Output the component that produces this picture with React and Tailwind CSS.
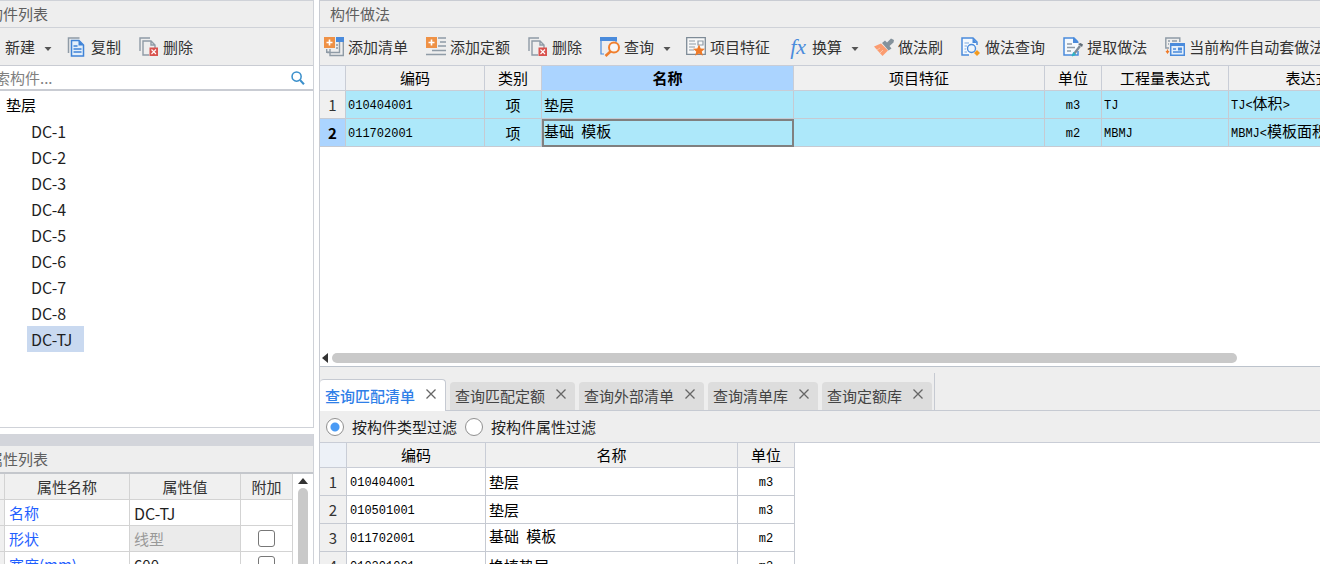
import clsx from 'clsx';

const components = ['DC-1', 'DC-2', 'DC-3', 'DC-4', 'DC-5', 'DC-6', 'DC-7', 'DC-8', 'DC-TJ'];

const methods = [
  { code: '010404001', type: '项', name: '垫层', unit: 'm3', expr: 'TJ', desc: 'TJ<体积>' },
  { code: '011702001', type: '项', name: '基础 模板', unit: 'm2', expr: 'MBMJ', desc: 'MBMJ<模板面积>' },
];

const matches = [
  { code: '010404001', name: '垫层', unit: 'm3' },
  { code: '010501001', name: '垫层', unit: 'm3' },
  { code: '011702001', name: '基础 模板', unit: 'm2' },
  { code: '010201001', name: '换填垫层', unit: 'm3' },
];

const tabs = ['查询匹配清单', '查询匹配定额', '查询外部清单', '查询清单库', '查询定额库'];

/* Icons */
function Icon({ className = 'w-5 h-5', children }) {
  return (
    <svg viewBox="0 0 20 20" fill="none" className={clsx('shrink-0', className)} aria-hidden="true">
      {children}
    </svg>
  );
}

function AddListIcon() {
  return (
    <Icon>
      <path d="M2.700 12v3.300h3" stroke="#8f9ba6" strokeWidth="1.400" />
      <path d="M6 12v6.500h13.300V4" stroke="#8f9ba6" strokeWidth="1.400" />
      <path d="M3 15.500h12.500V5" stroke="#8f9ba6" strokeWidth="1.400" />
      <path d="M12 0h8v5h-8z" fill="#4a8bdc" />
      <path d="M12 8h2M12 11h2" stroke="#8f9ba6" strokeWidth="1.300" />
      <path d="M0 0h11v11H0z" fill="#ef9145" />
      <path d="M5.500 2.500v6M2.500 5.500h6" stroke="#fff" strokeWidth="1.600" />
    </Icon>
  );
}

function AddQuotaIcon() {
  return (
    <Icon>
      <path d="M12 1h8M14 5h6M12 9h8M6 13.500h14M0 17.500h20" stroke="#8f9ba6" strokeWidth="1.500" />
      <path d="M0 0h11v11H0z" fill="#ef9145" />
      <path d="M5.500 2.500v6M2.500 5.500h6" stroke="#fff" strokeWidth="1.600" />
    </Icon>
  );
}

function DeleteIcon() {
  return (
    <Icon>
      <path d="M1 14V1h10" stroke="#8f9ba6" strokeWidth="1.400" />
      <path d="M10 18H4V4h8l4 4v3M12 4v4h4" stroke="#8f9ba6" strokeWidth="1.400" />
      <path d="M10.500 10.500H19V19h-8.500z" fill="#d9534f" />
      <path d="M12.500 12.500l4.500 4.500M17 12.500L12.500 17" stroke="#fff" strokeWidth="1.100" />
    </Icon>
  );
}

function CopyIcon() {
  return (
    <Icon>
      <path d="M1.500 16V1h11" stroke="#8f9ba6" strokeWidth="1.500" />
      <path d="M4.500 3.500H12l4.500 4.500v11h-12z" fill="#e3effb" stroke="#3f83d8" strokeWidth="1.500" />
      <path d="M11.500 3.500v5h5z" fill="#3f83d8" />
      <path d="M6.500 9h4M6.500 12h8M6.500 15h8" stroke="#3f83d8" strokeWidth="1.400" />
    </Icon>
  );
}

function QueryIcon() {
  return (
    <Icon>
      <path d="M1 3v14h3M16 3v2" stroke="#4a8bdc" strokeWidth="1.200" />
      <path d="M0 0h17v4H0z" fill="#4a8bdc" />
      <circle cx="14" cy="10.500" r="5" fill="#f6f6f6" stroke="#f07f2e" strokeWidth="2" />
      <path d="M10.500 14.500L5.500 19" stroke="#f07f2e" strokeWidth="2.600" />
    </Icon>
  );
}

function FeatureIcon() {
  return (
    <Icon>
      <path d="M.7.700h18.600v16.600H.7z" fill="#f8f8f8" stroke="#7e8b97" strokeWidth="1.300" />
      <path d="M3 4h6M3 7h7M3 10h6M3 13h5M12 4h5v4h-5zM12 10h2" stroke="#8f9ba6" strokeWidth="1.200" />
      <path d="M13 7.500l1.700 3.900 4.300.4-3.200 2.800 1 4.200-3.800-2.200-3.800 2.200 1-4.200L7 11.800l4.300-.4z" fill="#ef7a28" />
    </Icon>
  );
}

function FxIcon() {
  return (
    <span aria-hidden="true" className="w-5 text-[22px] leading-5 italic text-[#4a8bdc] font-['Liberation_Serif',serif]">
      fx
    </span>
  );
}

function BrushIcon() {
  return (
    <Icon>
      <path d="M0 9.500l7-3 7 7L8.500 19z" fill="#fb9c70" />
      <path d="M3 13l3-2M6 16l3-3" stroke="#fbc4a8" strokeWidth="1" />
      <path d="M8 6l3-2.500 2 2L17 1.500l3 1.500-.5 2.500-4 3.500 2 2.500-3 2z" fill="#84929c" />
    </Icon>
  );
}

function MethodQueryIcon() {
  return (
    <Icon>
      <path d="M8 18H1V1h11l4 4v3" fill="#f4f9fe" stroke="#4a8bdc" strokeWidth="1.500" />
      <path d="M11.500 1v5H16z" fill="#4a8bdc" />
      <path d="M3.500 6H8M3.500 9H6M3.500 12H5M3.500 15H6" stroke="#7ba9e0" strokeWidth="1.200" />
      <circle cx="10.500" cy="11.500" r="4" fill="#eef5fc" stroke="#4a8bdc" strokeWidth="1.400" />
      <path d="M16 13l3 3-3 3-3-3z" fill="#f39a1f" />
    </Icon>
  );
}

function ExtractIcon() {
  return (
    <Icon>
      <path d="M15 14v4H1V1h10l4 4" fill="#f4f9fe" stroke="#4a8bdc" strokeWidth="1.500" />
      <path d="M10 0v6h6z" fill="#4a8bdc" />
      <path d="M4 7h5M4 10.500h8M4 14h4" stroke="#8f9ba6" strokeWidth="1.400" />
      <path d="M11 17l6-8" stroke="#7e8b97" strokeWidth="2.400" />
      <path d="M15 7l4 3 1-2.500L17.500 6z" fill="#5f6b76" />
      <path d="M9 19l3.500-1.500-2-2z" fill="#2fb3c4" stroke="#2fb3c4" />
    </Icon>
  );
}

function AutoApplyIcon() {
  return (
    <Icon>
      <path d="M4 11H.8V1h14v4" stroke="#8f9ba6" strokeWidth="1.400" />
      <path d="M3 4h2M7 4h5M3 7h1" stroke="#8f9ba6" strokeWidth="1.400" />
      <path d="M2.500 12.500v3M1 14l1.500 2L4 14" stroke="#ef7a28" strokeWidth="1.200" />
      <path d="M5.700 6.700h13.600v11.600H5.700z" fill="#e3effb" stroke="#4a8bdc" strokeWidth="1.500" />
      <path d="M5 6h15v3H5z" fill="#4a8bdc" />
      <path d="M8 12h3M8 15h9" stroke="#4a8bdc" strokeWidth="1.500" />
      <path d="M13 10.500h4v3h-4z" fill="#4a8bdc" />
    </Icon>
  );
}

function Caret() {
  return (
    <svg viewBox="0 0 10 6" className="w-2.5 h-1.5 mt-1 ml-1 -mr-1" aria-hidden="true">
      <path d="M1.500 1h7L5 5z" fill="#555" />
    </svg>
  );
}

function ToolButton({ icon, label, caret }) {
  return (
    <button type="button" className="flex items-center gap-1 shrink-0 whitespace-nowrap">
      {icon}
      {label}
      {caret && <Caret />}
    </button>
  );
}

function PanelTitle({ children }) {
  return <h2 className="h-[26px] shrink-0 flex items-center text-[#5f5f5f] whitespace-nowrap">{children}</h2>;
}

/* Latin parts of a cell are set in the narrow monospaced face */
function CellText({ text }) {
  return text.split(/([\x20-\x7e]+)/).map((part, i) =>
    /^[\x20-\x7e]+$/.test(part) ? (
      <span key={i} className="font-['Liberation_Mono',monospace] text-[12px]">{part}</span>
    ) : (
      part
    )
  );
}

const th = 'h-[25px] p-0 font-normal bg-[#f0f0f0] border-r border-b border-[#c9cdd6]';
const td = 'h-7 p-0 px-0.5 border-r border-b border-[#c6cad2]';

function ComponentPanel() {
  return (
    <section className="flex-1 min-h-0 flex flex-col border border-l-0 border-[#cfd2d8]">
      <div className="bg-[#eeeeee] border-b border-[#cfd2d8] -ml-3">
        <PanelTitle>构件列表</PanelTitle>
      </div>
      <div className="h-[37px] shrink-0 flex items-center pl-[5px] bg-[#eeeeee]">
        <button type="button" className="flex items-center gap-1">
          新建
          <Caret />
        </button>
        <button type="button" className="flex items-center gap-1 ml-[18px]">
          <CopyIcon />
          复制
        </button>
        <button type="button" className="flex items-center gap-1 ml-[18px]">
          <DeleteIcon />
          删除
        </button>
      </div>
      <div className="h-[26px] shrink-0 flex items-center pr-2 border-t border-b-2 border-[#c9ccd3]">
        <input
          type="text"
          aria-label="搜索构件"
          placeholder="搜索构件..."
          className="flex-1 min-w-0 -ml-5 outline-none placeholder:text-[#808080]"
        />
        <Icon className="w-3.5 h-3.5">
          <circle cx="8" cy="8" r="6.500" stroke="#3a8fcb" strokeWidth="2.200" />
          <path d="M13 13l5.500 6" stroke="#3a8fcb" strokeWidth="3" />
        </Icon>
      </div>
      <ul className="flex-1 min-h-0 overflow-hidden text-[#1f1f1f]">
        <li>
          <div className="h-[27px] flex items-center pl-1.5 text-black">垫层</div>
          <ul className="pl-[27px]">
            {components.map((name) => (
              <li key={name}>
                <button
                  type="button"
                  className={clsx('h-[26px] flex items-center pl-1 pr-3 text-base', name === 'DC-TJ' && 'bg-[#c9d9f0]')}
                >
                  {name}
                </button>
              </li>
            ))}
          </ul>
        </li>
      </ul>
    </section>
  );
}

function PropertyPanel() {
  const name = 'h-[26px] p-0 pl-1 border-r border-b border-[#d3d3d3] text-[#1f5fff]';
  const cell = 'h-[26px] p-0 pl-1 border-r border-b border-[#d3d3d3] text-[#1f1f1f]';
  const readonlyCell = 'h-[26px] p-0 pl-1 border-r border-b border-[#d3d3d3] bg-[#ebebeb] text-[#999]';
  const check = 'appearance-none block mx-auto w-[17px] h-[17px] rounded-[3px] border border-[#777] bg-white';
  const head = 'h-[26px] p-0 font-normal bg-[#f0f0f0] border-r border-b border-[#d3d3d3] text-[#333]';

  return (
    <section className="h-[130px] shrink-0 flex flex-col overflow-hidden border-r border-[#cfd2d8]">
      <div className="h-3 shrink-0 bg-[#d3d5db]" />
      <div className="bg-[#eeeeee] border-b-2 border-[#c4c7cc] -ml-3">
        <PanelTitle>属性列表</PanelTitle>
      </div>
      <div className="flex-1 min-h-0 flex overflow-hidden">
        <table className="flex-1 table-fixed border-separate border-spacing-0 self-start">
          <colgroup>
            <col className="w-[5px]" />
            <col />
            <col className="w-[111px]" />
            <col className="w-[52px]" />
          </colgroup>
          <thead>
            <tr>
              <th className={head} />
              <th className={head}>属性名称</th>
              <th className={head}>属性值</th>
              <th className={head}>附加</th>
            </tr>
          </thead>
          <tbody>
            <tr>
              <td className="p-0 bg-[#f0f0f0] border-r border-b border-[#d3d3d3]" />
              <td className={name}>名称</td>
              <td className={clsx(cell, 'text-base leading-5')}>DC-TJ</td>
              <td className={cell} />
            </tr>
            <tr>
              <td className="p-0 bg-[#f0f0f0] border-r border-b border-[#d3d3d3]" />
              <td className={name}>形状</td>
              <td className={readonlyCell}>线型</td>
              <td className="p-0 border-r border-b border-[#d3d3d3]">
                <input type="checkbox" aria-label="形状 附加" className={check} />
              </td>
            </tr>
            <tr>
              <td className="p-0 bg-[#f0f0f0] border-r border-b border-[#d3d3d3]" />
              <td className={name}>宽度(mm)</td>
              <td className={cell}>600</td>
              <td className="p-0 border-r border-b border-[#d3d3d3]">
                <input type="checkbox" aria-label="宽度 附加" className={check} />
              </td>
            </tr>
          </tbody>
        </table>
        <div className="w-5 shrink-0 flex flex-col items-center pt-1 gap-1">
          <svg viewBox="0 0 10 6" className="w-2.5 h-1.5 shrink-0" aria-hidden="true">
            <path d="M0 6h10L5 0z" fill="#333" />
          </svg>
          <div className="w-2.5 flex-1 rounded-t-full bg-[#c9c9c9]" />
        </div>
      </div>
    </section>
  );
}

function MethodTable() {
  return (
    <table className="w-[1098px] table-fixed border-separate border-spacing-0 text-black whitespace-nowrap">
      <colgroup>
        <col className="w-[26px]" />
        <col className="w-[139px]" />
        <col className="w-[57px]" />
        <col className="w-[252px]" />
        <col className="w-[251px]" />
        <col className="w-[57px]" />
        <col className="w-[127px]" />
        <col className="w-[189px]" />
      </colgroup>
      <thead>
        <tr>
          <th className="h-[25px] p-0 bg-[#edf1f7] border-r border-b border-[#c9cdd6]" />
          <th className={th}>编码</th>
          <th className={th}>类别</th>
          <th className="h-[25px] p-0 font-bold bg-[#abd4ff] border-r border-b border-[#c9cdd6]">名称</th>
          <th className={th}>项目特征</th>
          <th className={th}>单位</th>
          <th className={th}>工程量表达式</th>
          <th className={th}>表达式说明</th>
        </tr>
      </thead>
      <tbody>
        {methods.map((row, i) => {
          const active = i === 1;
          const cell = clsx(td, 'bg-[#ade8fa]');
          return (
            <tr key={row.code}>
              <th
                className={clsx(
                  'p-0 border-r border-b border-[#c6cad2]',
                  active ? 'bg-[#abd4ff] font-bold' : 'bg-[#f0f0f0] font-normal text-[#333]'
                )}
              >
                {i + 1}
              </th>
              <td className={cell}><CellText text={row.code} /></td>
              <td className={clsx(cell, 'text-center')}>{row.type}</td>
              <td className={clsx(cell, active && 'outline-2 -outline-offset-2 outline-[#808080]')}>
                <CellText text={row.name} />
              </td>
              <td className={cell} />
              <td className={clsx(cell, 'text-center')}><CellText text={row.unit} /></td>
              <td className={cell}><CellText text={row.expr} /></td>
              <td className={cell}><CellText text={row.desc} /></td>
            </tr>
          );
        })}
      </tbody>
    </table>
  );
}

function MatchTable() {
  return (
    <table className="w-[475px] table-fixed border-separate border-spacing-0 text-black whitespace-nowrap">
      <colgroup>
        <col className="w-[27px]" />
        <col className="w-[139px]" />
        <col className="w-[252px]" />
        <col className="w-[57px]" />
      </colgroup>
      <thead>
        <tr>
          <th className="h-[25px] p-0 bg-[#edf1f7] border-r border-b border-[#c9cdd6]" />
          <th className={th}>编码</th>
          <th className={th}>名称</th>
          <th className={th}>单位</th>
        </tr>
      </thead>
      <tbody>
        {matches.map((row, i) => (
          <tr key={row.code}>
            <th className="p-0 font-normal text-[#333] bg-[#f0f0f0] border-r border-b border-[#c6cad2]">{i + 1}</th>
            <td className={clsx(td, 'pl-[3px]')}><CellText text={row.code} /></td>
            <td className={clsx(td, 'pl-[3px]')}><CellText text={row.name} /></td>
            <td className={clsx(td, 'text-center')}><CellText text={row.unit} /></td>
          </tr>
        ))}
      </tbody>
    </table>
  );
}

function Tab({ label, active }) {
  return (
    <div
      className={clsx(
        'flex gap-2.5 shrink-0 pl-[5px] pr-2 rounded-t whitespace-nowrap',
        active
          ? 'h-8 -mb-px bg-white border-t border-r border-[#c6cad2] text-[#2f80e8] font-medium'
          : 'h-7 bg-[#dddddd] text-[#444]'
      )}
    >
      <button type="button" role="tab" aria-selected={active}>{label}</button>
      <button type="button" aria-label={'关闭 ' + label} className={clsx('self-start', active ? 'pt-2' : 'pt-1.5')}>
        <svg viewBox="0 0 12 12" className="w-3 h-3" aria-hidden="true">
          <path d="M1.500 1.500l9 9M10.500 1.500l-9 9" stroke="#666" strokeWidth="1.300" />
        </svg>
      </button>
    </div>
  );
}

function Radio({ label, checked }) {
  return (
    <label className="flex items-center gap-2 whitespace-nowrap">
      <input
        type="radio"
        name="filter"
        defaultChecked={checked}
        className="appearance-none w-[18px] h-[18px] rounded-full border border-[#909090] bg-white checked:bg-[radial-gradient(circle,#4a9bf5_4px,#fff_5px)]"
      />
      {label}
    </label>
  );
}

function App() {
  return (
    <div className="h-screen flex gap-[5px] overflow-hidden bg-white text-[15px] leading-5 text-[#333] font-['Noto_Sans_CJK_SC',sans-serif]">
      {/* Component tree and properties */}
      <aside className="w-[314px] shrink-0 flex flex-col gap-1.5 overflow-hidden">
        <ComponentPanel />
        <PropertyPanel />
      </aside>

      {/* Methods of the selected component */}
      <main className="flex-1 min-w-0 flex flex-col border-l border-t border-[#c9ccd3]">
        <div className="pl-2.5 bg-[#eeeeee] border-b border-[#cfd2d8]">
          <PanelTitle>构件做法</PanelTitle>
        </div>
        <div className="h-[38px] shrink-0 flex items-center gap-[18px] pl-1 overflow-hidden bg-[#eeeeee] border-b border-[#c9cdd6]">
          <ToolButton icon={<AddListIcon />} label="添加清单" />
          <ToolButton icon={<AddQuotaIcon />} label="添加定额" />
          <ToolButton icon={<DeleteIcon />} label="删除" />
          <ToolButton icon={<QueryIcon />} label="查询" caret />
          <ToolButton icon={<FeatureIcon />} label="项目特征" />
          <ToolButton icon={<FxIcon />} label="换算" caret />
          <ToolButton icon={<BrushIcon />} label="做法刷" />
          <ToolButton icon={<MethodQueryIcon />} label="做法查询" />
          <ToolButton icon={<ExtractIcon />} label="提取做法" />
          <ToolButton icon={<AutoApplyIcon />} label="当前构件自动套做法" />
        </div>
        <div className="flex-1 min-h-0 overflow-hidden">
          <MethodTable />
        </div>
        <div className="h-[18px] shrink-0 flex items-center gap-1 pl-0.5 border-b border-[#bcc3cc]">
          <svg viewBox="0 0 6 10" className="w-1.5 h-2.5" aria-hidden="true">
            <path d="M6 0v10L0 5z" fill="#333" />
          </svg>
          <div className="w-[905px] max-w-full h-2.5 rounded-full bg-[#c9c9c9]" />
        </div>

        {/* Query results */}
        <section className="h-[197px] shrink-0 flex flex-col overflow-hidden">
          <div className="pt-1.5 bg-[#eeeeee] border-b border-[#c6cad2] flex">
            <div role="tablist" className="h-[37px] flex items-end gap-1 pr-0.5 border-r border-[#c6cad2]">
              {tabs.map((label, i) => (
                <Tab key={label} label={label} active={i === 0} />
              ))}
            </div>
          </div>
          <div className="h-8 shrink-0 flex items-center gap-2 pl-1.5 bg-[#eeeeee] border-b border-[#c9cdd6] text-[#1f1f1f]">
            <Radio label="按构件类型过滤" checked />
            <Radio label="按构件属性过滤" />
          </div>
          <MatchTable />
        </section>
      </main>
    </div>
  );
}

export default App;
